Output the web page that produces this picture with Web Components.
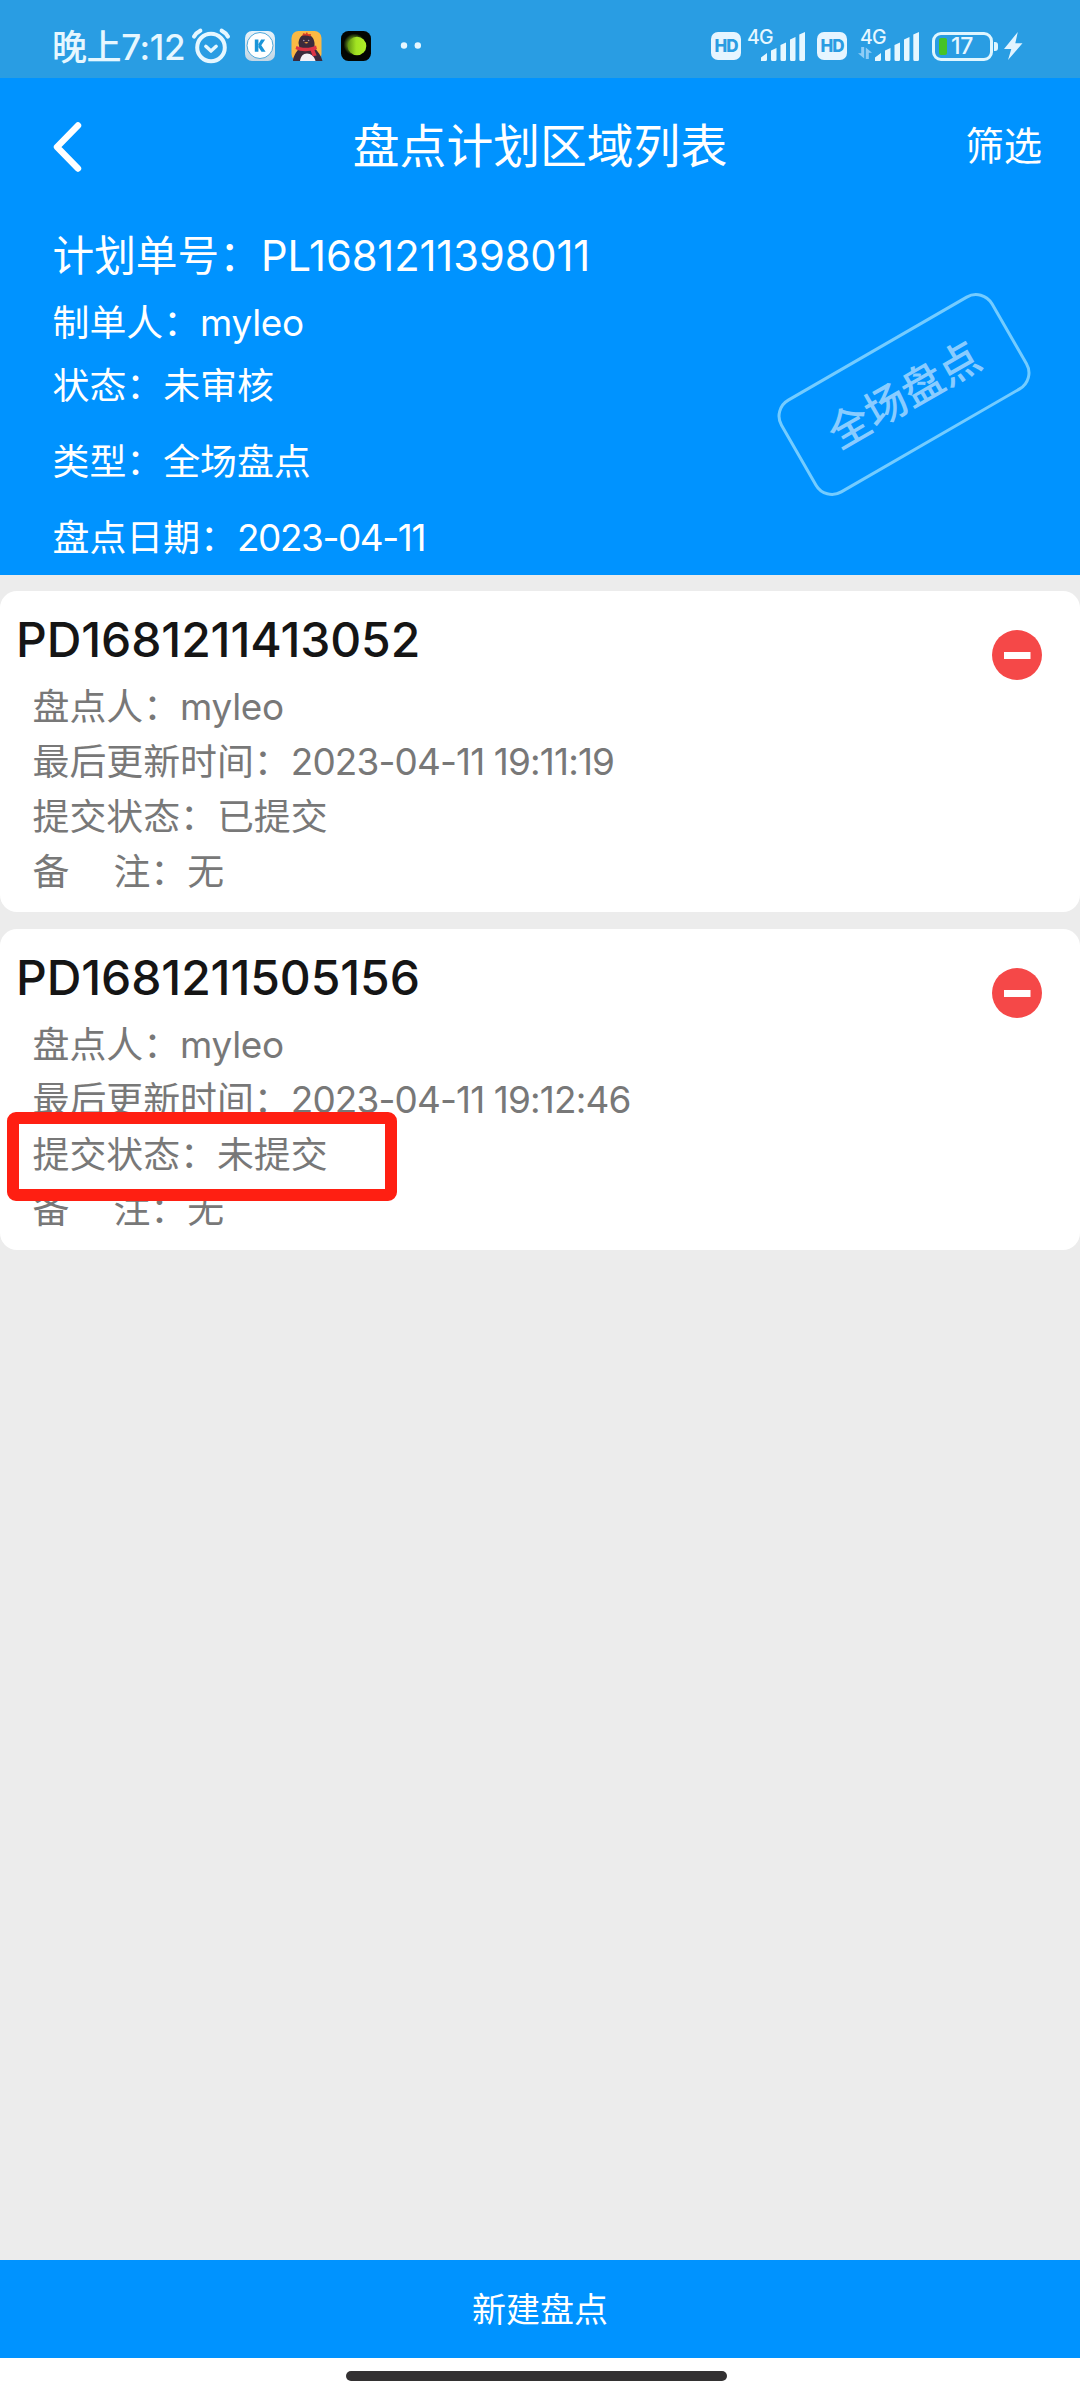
<!DOCTYPE html>
<html lang="zh-CN">
<head>
<meta charset="utf-8">
<title>盘点计划区域列表</title>
<style>
  body {
    margin: 0;
    background: #ececec;
    font-family: Inter, "Noto Sans CJK SC", sans-serif;
  }
</style>
</head>
<body>
<inventory-app>
  <status-bar slot="top" time="晚上7:12" battery="17"></status-bar>
  <nav-bar slot="top" action="筛选">盘点计划区域列表</nav-bar>
  <plan-header slot="top" stamp="全场盘点">
    <plan-field label="计划单号：" style="--h:85px; --size:41.7px; --ls:-.1px">PL1681211398011</plan-field>
    <plan-field label="制单人：" style="--h:48px; --ls:-.3px">myleo</plan-field>
    <plan-field label="状态：" style="--h:77px; --ls:0">未审核</plan-field>
    <plan-field label="类型：" style="--h:75px; --ls:0">全场盘点</plan-field>
    <plan-field label="盘点日期：" style="--h:77px; --ls:-1.4px">2023-04-11</plan-field>
  </plan-header>

  <area-card code="PD1681211413052" person="myleo" updated="2023-04-11 19:11:19" state="已提交" remark="无"></area-card>
  <area-card code="PD1681211505156" person="myleo" updated="2023-04-11 19:12:46" state="未提交" remark="无" marked></area-card>

  <action-button slot="bottom">新建盘点</action-button>
  <home-indicator slot="bottom"></home-indicator>
</inventory-app>

<script>
/** <inventory-app> — page shell: top area, scrolling list, bottom bar */
class InventoryApp extends HTMLElement {
  connectedCallback() {
    this.attachShadow({ mode: "open" }).innerHTML = `
      <style>
        :host { display: flex; flex-direction: column; width: 1080px; height: 2400px; }
        main { flex: 1; display: flex; flex-direction: column; gap: 17px; padding-top: 16px; background: #ececec; }
      </style>
      <slot name="top"></slot>
      <main><slot></slot></main>
      <slot name="bottom"></slot>
    `;
  }
}

const ICONS = {
  alarm: `<svg width="40" height="38" viewBox="0 0 40 38" fill="none" stroke="#e6f7ff" stroke-linecap="round" stroke-linejoin="round">
    <circle cx="20" cy="20.5" r="13.8" stroke-width="4"/>
    <path d="M14.8 19.3l5.2 4.8 5.2-4.8" stroke-width="3.4"/>
    <path d="M3 9.600Q5.400 5.600 9.400 3.600M37 9.600Q34.600 5.600 30.600 3.600" stroke-width="4"/></svg>`,
  kapp: `<svg width="30" height="30" viewBox="0 0 30 30">
    <defs><linearGradient id="g" x1="0" y1="0" x2="0" y2="1"><stop offset="0" stop-color="#e8f3fa"/><stop offset="1" stop-color="#c3d6e4"/></linearGradient></defs>
    <rect width="30" height="30" rx="7" fill="url(#g)"/>
    <circle cx="15" cy="14.5" r="13" fill="#fff" stroke="#3e9fd6" stroke-width=".9"/>
    <path d="M9.800 8.500h3.600v12.200H9.800zM20.200 8.500h-4.100l-3 5.200v1.900l3.400 5.100h4.100l-4.300-6.400z" fill="#1b95d8"/></svg>`,
  penguin: `<svg width="32" height="30" viewBox="0 0 32 30">
    <rect x=".5" width="30" height="30" rx="7" fill="#fbb944"/>
    <path d="M2 30C2 26 5 21 8.500 17L7.500 12C8 6 11 3.500 15.500 3.500S23 7 23.500 12v5c3 3 6.500 7 8 13z" fill="#3b2a3c"/>
    <path d="M9 30c.5-4.500 3-7.500 7-7.500s7.500 3 8.500 7.500z" fill="#f4f0f6"/>
    <path d="M11 5l1.500-3 2 1L16 1l1 2.200 3-.2-.6 2.600c-3-1.200-5.600-1.200-8.400-.6z" fill="#d63a28"/>
    <path d="M5.500 15c5 2.500 14 2.500 19.500-.5l1 3.500-2.500 1.200 2.200 5.300-4 .8-2-5.500C14 20.500 8.500 20.300 4.500 18z" fill="#dc3345"/>
    <circle cx="12.800" cy="9.500" r=".8" fill="#a898ae"/><circle cx="17.600" cy="9.500" r=".8" fill="#a898ae"/>
    <path d="M13.200 11.500q2.200-1.200 4.200 0-2.100 1.800-4.200 0z" fill="#f2a03c"/></svg>`,
  lime: `<svg width="30" height="30" viewBox="0 0 30 30">
    <defs>
      <linearGradient id="g"><stop offset="0" stop-color="#5f9312"/><stop offset=".45" stop-color="#a2e322"/><stop offset="1" stop-color="#b0ee28"/></linearGradient>
      <radialGradient id="h"><stop offset=".6" stop-color="#56821a"/><stop offset="1" stop-color="#56821a" stop-opacity="0"/></radialGradient>
    </defs>
    <rect width="30" height="30" rx="7.500" fill="#030602"/>
    <circle cx="13.500" cy="13.500" r="11" fill="url(#h)"/>
    <circle cx="16" cy="15" r="9.300" fill="url(#g)"/></svg>`,
  dots: `<svg width="22" height="30" viewBox="0 0 22 30" fill="#e6f7ff"><circle cx="4" cy="14.500" r="3.200"/><circle cx="17.800" cy="14.500" r="3.200"/></svg>`,
  bars: `<svg width="45" height="29" viewBox="0 0 45 29" fill="#e6f7ff">
    <path d="M0 29v-3.500L6 21v6.500q0 1.500-1.500 1.500zM10 18.500l5.500-2.500v11.500q0 1.500-1.500 1.500h-2.500q-1.500 0-1.500-1.500zM19.500 13l5.500-2.500v17q0 1.500-1.500 1.500H21q-1.500 0-1.500-1.500zM29 7.500L34.500 5v22.500q0 1.500-1.500 1.500h-2.500q-1.500 0-1.500-1.500zM38.300 2.500L44 0v27.500q0 1.500-1.500 1.500h-2.700q-1.500 0-1.500-1.500z"/></svg>`,
  updown: `<svg width="14" height="12" viewBox="0 0 14 12" fill="#8fcdf6"><path d="M3.200 0h3v11.500L0 6.300h3.200zM7.800 12V.5L14 5.700h-3.200V12z"/></svg>`,
  bolt: `<svg width="19" height="28" viewBox="0 0 19 28" fill="#e2f4ff"><path d="M13.800 0L0 17h7.300L4 28 18.500 11.200h-7.200z"/></svg>`,
};

/** <status-icon name="..."> — one of the small system glyphs */
class StatusIcon extends HTMLElement {
  connectedCallback() {
    this.attachShadow({ mode: "open" }).innerHTML = `
      <style>:host, svg { display: block; flex-shrink: 0; }</style>
      ${ICONS[this.getAttribute("name")]}
    `;
  }
}

/** <sim-signal> — HD badge, network label and signal bars; `traffic` adds the arrows */
class SimSignal extends HTMLElement {
  connectedCallback() {
    const traffic = this.hasAttribute("traffic");
    this.attachShadow({ mode: "open" }).innerHTML = `
      <style>
        :host { display: flex; height: 33px; align-items: flex-end; color: #e6f7ff; }
        .hd {
          width: 30px; height: 28px; border-radius: 7px; background: #e6f5ff; color: #2a9ce2;
          font: 800 17px/28px Inter, sans-serif; text-align: center; letter-spacing: -.9px;
          margin-bottom: 1px;
        }
        .net { display: grid; grid-template-rows: 19px 14px; width: ${traffic ? 28 : 20}px; margin-left: ${traffic ? 11 : 0}px; }
        .gen { font: 500 19.5px/18px Inter, sans-serif; white-space: nowrap; letter-spacing: -.8px; margin-left: ${traffic ? 2 : 6}px; }
        status-icon[name="bars"] { margin-left: ${traffic ? -11 : 0}px; }
      </style>
      <span class="hd">HD</span>
      <span class="net"><span class="gen">4G</span>${traffic ? `<status-icon name="updown"></status-icon>` : ""}</span>
      <status-icon name="bars"></status-icon>
    `;
  }
}

class StatusBar extends HTMLElement {
  connectedCallback() {
    this.attachShadow({ mode: "open" }).innerHTML = `
      <style>
        :host {
          display: flex; align-items: center; box-sizing: border-box;
          height: 78px; padding: 14px 57px 0 52px;
          background: #299de3; color: #e6f7ff;
        }
        .time { font-size: 35px; font-weight: 500; line-height: 40px; letter-spacing: -.4px; width: 139px; white-space: nowrap; padding-top: 2px; }
        .apps { display: flex; align-items: center; }
        .apps status-icon:nth-child(2) { margin-left: 14px; }
        .apps status-icon:nth-child(3) { margin-left: 16px; }
        .apps status-icon:nth-child(4) { margin-left: 18px; }
        .apps status-icon:nth-child(5) { margin-left: 29px; }
        .system { margin-left: auto; display: flex; align-items: center; }
        sim-signal { margin-top: -3px; margin-right: 11px; }
        sim-signal[traffic] { margin-right: 12px; }
        .battery {
          display: flex; align-items: center; box-sizing: border-box; width: 61px; height: 29px;
          border: 3px solid #dff6ff; border-radius: 9px; padding-left: 4px;
          font-size: 23px; font-weight: 500; line-height: 22px; letter-spacing: -.3px;
        }
        .level { width: 8px; height: 17px; border-radius: 2px; background: #45c327; margin-right: 4px; }
        .tip { width: 4px; height: 9px; border-radius: 0 3px 3px 0; background: #dff6ff; margin: 0 6px 0 1px; }
      </style>
      <span class="time">${this.getAttribute("time")}</span>
      <div class="apps">
        <status-icon name="alarm"></status-icon>
        <status-icon name="kapp"></status-icon>
        <status-icon name="penguin"></status-icon>
        <status-icon name="lime"></status-icon>
        <status-icon name="dots"></status-icon>
      </div>
      <div class="system">
        <sim-signal></sim-signal>
        <sim-signal traffic></sim-signal>
        <span class="battery"><i class="level"></i>${this.getAttribute("battery")}</span>
        <i class="tip"></i>
        <status-icon name="bolt"></status-icon>
      </div>
    `;
  }
}

class NavBar extends HTMLElement {
  connectedCallback() {
    this.attachShadow({ mode: "open" }).innerHTML = `
      <style>
        :host {
          display: grid; grid-template-columns: 1fr auto 1fr; align-items: center;
          box-sizing: border-box; height: 135px; padding: 1px 38px 0 51px;
          background: #0093ff; color: #fff; line-height: 60px;
        }
        svg { display: block; margin-top: 2px; }
        h1 { margin: 0 0 0 -13px; font-size: 46.8px; font-weight: 400; }
        .action { justify-self: end; font-size: 38.3px; }
      </style>
      <svg width="34" height="54" viewBox="0 0 34 54" fill="none" stroke="#fff" stroke-width="6.4" stroke-linecap="round" stroke-linejoin="round"><path d="M27 5.500L6 27l21 21.500"/></svg>
      <h1><slot></slot></h1>
      <span class="action">${this.getAttribute("action")}</span>
    `;
  }
}

/** <plan-header> — plan summary with the rotated type stamp over it */
class PlanHeader extends HTMLElement {
  connectedCallback() {
    this.attachShadow({ mode: "open" }).innerHTML = `
      <style>
        :host {
          display: flex; flex-direction: column; position: relative; box-sizing: border-box;
          height: 362px; padding: 1px 0 0 52.5px; background: #0093ff; color: #fff;
        }
        .stamp {
          position: absolute; right: 53px; top: 127px; box-sizing: border-box;
          width: 246px; height: 109px; border: 3px solid #74ccff; border-radius: 20px;
          color: #8accff; font-size: 42px; font-weight: 500; line-height: 104px; text-align: center;
          transform: rotate(-30deg);
        }
      </style>
      <slot></slot>
      <div class="stamp">${this.getAttribute("stamp")}</div>
    `;
  }
}

/** <plan-field label="..."> — one label/value line; row height and size come from custom properties */
class PlanField extends HTMLElement {
  connectedCallback() {
    this.attachShadow({ mode: "open" }).innerHTML = `
      <style>
        :host { display: flex; flex-shrink: 0; height: var(--h); line-height: var(--h); font-size: var(--size, 36.9px); white-space: pre; }
        .value { letter-spacing: var(--ls); }
      </style>
      <span>${this.getAttribute("label")}</span><span class="value"><slot></slot></span>
    `;
  }
}

/** <area-card> — one count sheet; `marked` frames the state line in red */
class AreaCard extends HTMLElement {
  connectedCallback() {
    const attr = name => this.getAttribute(name);
    this.attachShadow({ mode: "open" }).innerHTML = `
      <style>
        :host {
          display: flex; justify-content: space-between; position: relative; box-sizing: border-box;
          height: 321px; padding: 10px 38px 0 0; border-radius: 17px; background: #fff;
        }
        h2 { margin: 0 0 1px 16px; font-size: 48px; font-weight: 500; line-height: 77px; letter-spacing: -.1px; color: #151515; }
        p { display: flex; margin: 0 0 0 32.5px; height: 55px; line-height: 55px; font-size: 36.9px; color: #787878; white-space: pre; }
        .latin { letter-spacing: -.85px; }
        .name { letter-spacing: -.3px; }
        .gap { width: 44px; }
        svg { display: block; margin-top: 29px; }
        .frame {
          position: absolute; left: 7px; top: 183px; box-sizing: border-box;
          width: 390px; height: 89px; border: 12px solid #ff1f12; border-radius: 9px;
        }
      </style>
      <div>
        <h2>${attr("code")}</h2>
        <p>盘点人：<span class="name">${attr("person")}</span></p>
        <p>最后更新时间：<span class="latin">${attr("updated")}</span></p>
        <p>提交状态：${attr("state")}</p>
        <p>备<i class="gap"></i>注：${attr("remark")}</p>
      </div>
      <svg width="50" height="50" viewBox="0 0 50 50"><circle cx="25" cy="25" r="25" fill="#f54848"/><rect x="12" y="22" width="26.500" height="7" fill="#fff"/></svg>
      ${this.hasAttribute("marked") ? `<div class="frame"></div>` : ""}
    `;
  }
}

class ActionButton extends HTMLElement {
  connectedCallback() {
    this.attachShadow({ mode: "open" }).innerHTML = `
      <style>
        :host {
          display: block; height: 98px; line-height: 99px; background: #0093ff;
          color: #fff; font-size: 34px; text-align: center;
        }
      </style>
      <slot></slot>
    `;
  }
}

class HomeIndicator extends HTMLElement {
  connectedCallback() {
    this.attachShadow({ mode: "open" }).innerHTML = `
      <style>
        :host { display: block; box-sizing: border-box; height: 42px; padding: 13px 0 0 346px; background: #fff; }
        div { width: 381px; height: 10px; border-radius: 5px; background: #333132; }
      </style>
      <div></div>
    `;
  }
}

customElements.define("status-icon", StatusIcon);
customElements.define("sim-signal", SimSignal);
customElements.define("status-bar", StatusBar);
customElements.define("nav-bar", NavBar);
customElements.define("plan-field", PlanField);
customElements.define("plan-header", PlanHeader);
customElements.define("area-card", AreaCard);
customElements.define("action-button", ActionButton);
customElements.define("home-indicator", HomeIndicator);
customElements.define("inventory-app", InventoryApp);
</script>
</body>
</html>
